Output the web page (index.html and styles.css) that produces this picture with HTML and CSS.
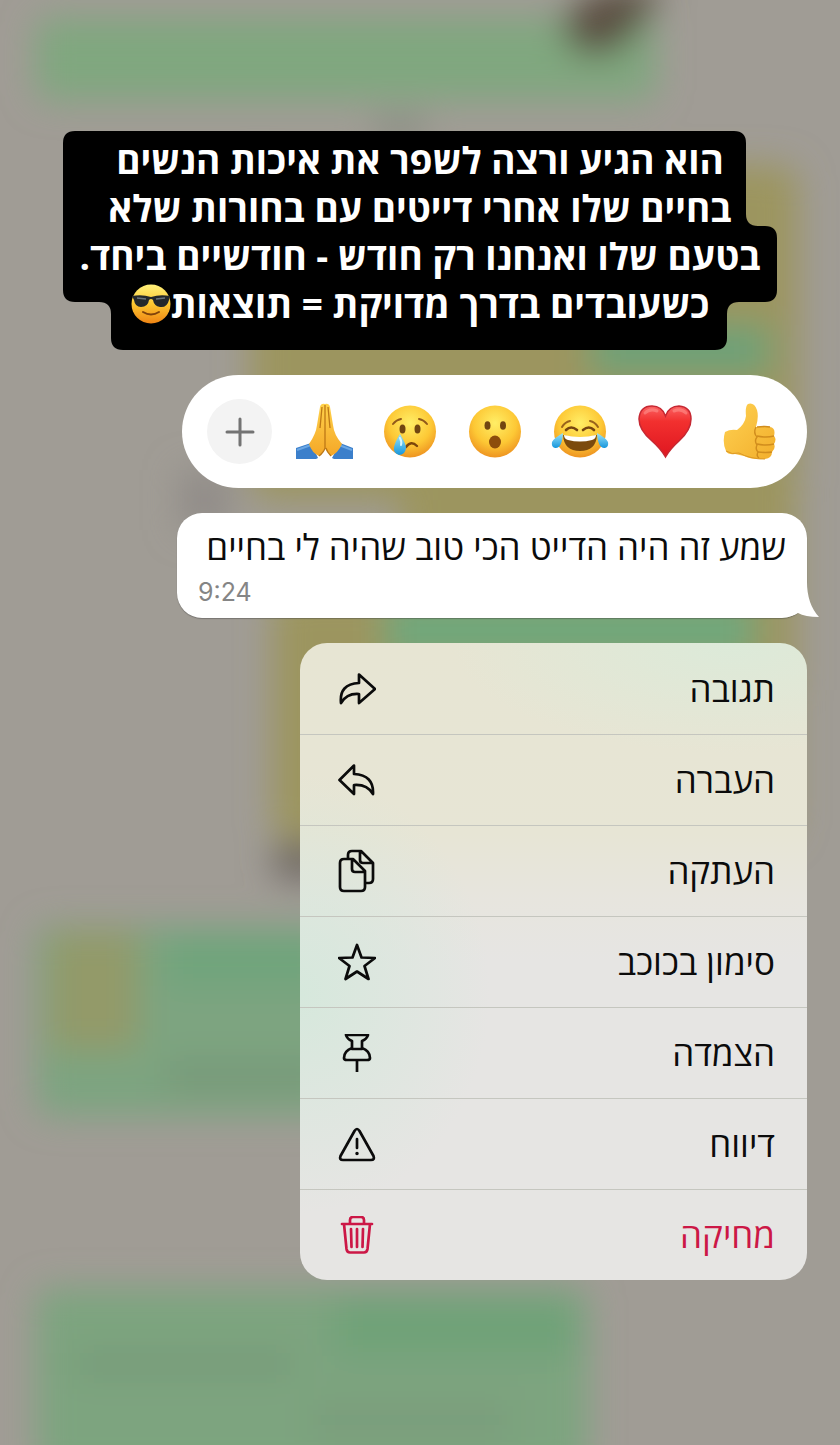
FILE: index.html
```html
<!DOCTYPE html>
<html lang="he" dir="rtl">
<head>
<meta charset="utf-8">
<meta name="viewport" content="width=device-width, initial-scale=1">
<title>הודעה</title>
<link rel="stylesheet" href="styles.css">
</head>
<body>
<svg class="backdrop" viewBox="0 0 840 1445" preserveAspectRatio="none" aria-hidden="true">
  <defs>
    <filter id="soft" x="-30%" y="-30%" width="160%" height="160%"><feGaussianBlur stdDeviation="17"/></filter>
  </defs>
  <rect width="840" height="1445" fill="#a09c95"/>
  <g filter="url(#soft)">
    <rect x="36" y="18" width="620" height="82" rx="14" fill="#80a77f"/>
    <path d="M560 20L600-12H665L630 40Q600 66 572 48Z" fill="#5c4f43"/>
    <rect x="375" y="118" width="50" height="20" fill="#858a80"/>
    <rect x="250" y="165" width="548" height="335" rx="20" fill="#9c955f"/>
    <rect x="590" y="325" width="180" height="50" fill="#6ca278"/>
    <rect x="400" y="490" width="396" height="200" fill="#9c955f"/>
    <rect x="272" y="590" width="520" height="250" rx="20" fill="#9c955f"/>
    <rect x="385" y="600" width="370" height="60" fill="#6fa77b"/>
    <rect x="180" y="470" width="50" height="60" fill="#918c88"/>
    <rect x="272" y="842" width="60" height="38" rx="18" fill="#6f6963"/>
    <rect x="36" y="926" width="330" height="190" rx="16" fill="#7da480"/>
    <rect x="165" y="936" width="160" height="50" fill="#6fa47b"/>
    <rect x="165" y="1060" width="160" height="32" fill="#789979"/>
    <rect x="50" y="932" width="88" height="118" fill="#939a69"/>
    <rect x="36" y="1288" width="552" height="190" rx="16" fill="#7da47f"/>
    <rect x="335" y="1298" width="240" height="58" fill="#6fa278"/>
    <rect x="75" y="1350" width="220" height="28" fill="#789b79"/>
    <rect x="310" y="1400" width="200" height="40" fill="#7a9e7b"/>
  </g>
</svg>

<main class="screen">
  <div class="caption">
    <svg class="caption-shape" viewBox="0 0 714 219" preserveAspectRatio="none" aria-hidden="true">
      <path d="M12 0H671Q683 0 683 12V83Q683 95 695 95H702Q714 95 714 107V159Q714 171 702 171H676Q664 171 664 183V207Q664 219 652 219H60Q48 219 48 207V183Q48 171 36 171H12Q0 171 0 159V12Q0 0 12 0Z"/>
    </svg>
    <p class="caption-text">הוא הגיע ורצה לשפר את איכות הנשים<br>בחיים שלו אחרי דייטים עם בחורות שלא<br>בטעם שלו ואנחנו רק חודש - חודשיים ביחד.<br>כשעובדים בדרך מדויקת = תוצאות<svg class="inline-emoji" viewBox="0 0 40 40" role="img" aria-label="משקפי שמש"><defs><linearGradient id="shade" x1="0" y1="0" x2="0" y2="1"><stop offset="0" stop-color="#fff07a"/><stop offset=".5" stop-color="#fdc730"/><stop offset="1" stop-color="#ef8414"/></linearGradient></defs><circle cx="20" cy="20" r="19.5" fill="url(#shade)"/><path d="M1 12Q11 10 20 13Q29 10 39 12L38 16Q36 24 29 23Q23 22 22 16Q20 14 18 16Q17 23 10 23Q4 23 3 16Z" fill="#24282b"/><path d="M6 14L15 15M25 15L34 14" stroke="#69737b" stroke-width="1.5"/><path d="M12 28Q20 33 28 28" fill="none" stroke="#80430b" stroke-width="2" stroke-linecap="round"/></svg></p>
  </div>

  <div class="reactions" role="group" aria-label="תגובות">
    <button class="reaction" type="button" aria-label="אגודל למעלה">
      <svg viewBox="0 0 60 60">
        <defs><linearGradient id="thumb" x1="0" y1="0" x2="1" y2="1"><stop offset="0" stop-color="#ffd253"/><stop offset="1" stop-color="#f2ae2b"/></linearGradient></defs>
        <path d="M5 30Q10 27 17 28Q25 22 26 14Q25 4 28 2Q34 0 37 8Q39 15 36 25L50 25Q56 26 54 34Q57 37 54 42Q56 46 52 50Q52 56 45 57Q33 58 24 54L15 52Q8 53 6 49Q2 40 5 30Z" fill="url(#thumb)"/>
        <path d="M36 25Q33 31 37 35Q34 39 37 43Q35 47 38 50Q36 54 39 56" fill="none" stroke="#d18d1d" stroke-width="1.4"/>
        <path d="M37 34Q46 36 54 34M37 42Q46 44 54 42M38 50Q46 51 52 50M37 25Q46 24 50 25" fill="none" stroke="#d18d1d" stroke-width="1.6"/>
        <path d="M6 49Q12 53 19 51Q30 57 45 57" fill="none" stroke="#dc9826" stroke-width="1"/>
      </svg>
    </button>
    <button class="reaction" type="button" aria-label="לב אדום">
      <svg viewBox="0 0 60 60">
        <defs><linearGradient id="heart" x1="0" y1="0" x2="0" y2="1"><stop offset="0" stop-color="#fb6262"/><stop offset=".3" stop-color="#f2302f"/><stop offset="1" stop-color="#df1620"/></linearGradient></defs>
        <path d="M30.500 55Q26 47 17 39Q4 28 4 17Q5 4 17 4Q27 4 30.500 14Q34 4 44 4Q56 5 56 17Q56 28 44 39Q35 47 30.500 55Z" fill="url(#heart)" stroke="#c62832" stroke-width="1.500"/>
        <path d="M10 11Q15 6 22 9M39 9Q46 6 51 11" fill="none" stroke="#ff9b95" stroke-width="3" stroke-linecap="round" opacity=".5"/>
      </svg>
    </button>
    <button class="reaction" type="button" aria-label="דמעות של צחוק">
      <svg viewBox="0 0 60 60">
        <defs><radialGradient id="face" cx=".5" cy=".34" r=".66"><stop offset="0" stop-color="#ffee66"/><stop offset=".62" stop-color="#fdc835"/><stop offset="1" stop-color="#ee9421"/></radialGradient>
        <linearGradient id="tear" x1="0" y1="0" x2="0" y2="1"><stop offset="0" stop-color="#9ce4fa"/><stop offset="1" stop-color="#1696dc"/></linearGradient></defs>
        <circle cx="30" cy="29.500" r="26" fill="url(#face)"/>
        <path d="M13 33Q30 38 47 33Q46 49 30 49Q14 49 13 33Z" fill="#7b4a0d"/>
        <path d="M14 33Q30 37 46 33Q46 37 42 38Q30 41 18 38Q14 37 14 33Z" fill="#fff"/>
        <path d="M16 28Q21 23 27 28M33 28Q39 23 44 28" fill="none" stroke="#754510" stroke-width="2.600" stroke-linecap="round"/>
        <path d="M12 25Q15 20 20 19M40 19Q45 20 48 25" fill="none" stroke="#9a631b" stroke-width="2" stroke-linecap="round"/>
        <path d="M13 31Q4 36 2 40Q1 45 5 46Q12 47 13 31ZM47 31Q56 36 58 40Q59 45 55 46Q48 47 47 31Z" fill="url(#tear)"/>
      </svg>
    </button>
    <button class="reaction" type="button" aria-label="מופתע">
      <svg viewBox="0 0 60 60">
        <circle cx="30" cy="29.500" r="26" fill="url(#face)"/>
        <ellipse cx="22.500" cy="23.500" rx="3" ry="4.300" fill="#714611"/><ellipse cx="38" cy="23.500" rx="3" ry="4.300" fill="#714611"/>
        <ellipse cx="30" cy="40" rx="6" ry="6.500" fill="#8c4d0c"/>
      </svg>
    </button>
    <button class="reaction" type="button" aria-label="עצוב">
      <svg viewBox="0 0 60 60">
        <circle cx="30" cy="29.500" r="26" fill="url(#face)"/>
        <path d="M13 22Q16 18 21 17M39 17Q44 18 47 22" fill="none" stroke="#91591a" stroke-width="2" stroke-linecap="round"/>
        <ellipse cx="22.500" cy="27" rx="3" ry="4.500" fill="#714611"/><ellipse cx="37.500" cy="27" rx="3" ry="4.500" fill="#714611"/>
        <path d="M26 45Q31 38 37 44" fill="none" stroke="#7c450b" stroke-width="2.400" stroke-linecap="round"/>
        <path d="M20 32Q26 42 26 46Q25 53 19 53Q13 51 14 45Q15 40 20 32Z" fill="url(#tear)"/>
        <path d="M20 36Q22 40 21 43" fill="none" stroke="#d8f7ff" stroke-width="2" stroke-linecap="round"/>
      </svg>
    </button>
    <button class="reaction" type="button" aria-label="ידיים צמודות">
      <svg viewBox="0 0 60 60">
        <defs><linearGradient id="palm" x1="0" y1="0" x2="0" y2="1"><stop offset="0" stop-color="#ffd24b"/><stop offset="1" stop-color="#f4a728"/></linearGradient></defs>
        <path d="M1 46L16 41L23 56L21 57H1ZM58 46L45 41L37 56L39 57H58Z" fill="#3b7fcb"/>
        <path d="M2 48L16 43M44 43L57 48" stroke="#6ba7e4" stroke-width="2"/>
        <path d="M30 2Q26 1 25 5L22 23Q21 32 14 42Q17 51 24 54Q29 49 30 46Q31 49 36 54Q43 51 47 42Q39 33 38 23L35 5Q34 1 30 2Z" fill="url(#palm)"/>
        <path d="M30 3V46Q29 50 24 54M31 46Q32 50 36 54M27 5L25 26M33 5L35 26" fill="none" stroke="#bd7816" stroke-width="1.300"/>
      </svg>
    </button>
    <button class="reaction reaction-more" type="button" aria-label="עוד תגובות">
      <svg viewBox="0 0 60 60"><path d="M30 17V43M17 30H43" fill="none" stroke="#737373" stroke-width="3" stroke-linecap="round"/></svg>
    </button>
  </div>

  <article class="message">
    <p class="message-text">שמע זה היה הדייט הכי טוב שהיה לי בחיים</p>
    <time class="message-time" dir="ltr" datetime="09:24">9:24</time>
    <svg class="message-tail" viewBox="0 0 36 36" aria-hidden="true"><path d="M0 0H24Q24 22 36 35Q22 35 15 31Q9 35 0 35Z" fill="#fff"/></svg>
  </article>

  <nav class="menu" aria-label="פעולות">
    <button class="menu-item" type="button"><span>תגובה</span>
      <svg class="icon" viewBox="0 0 38 38"><path d="M21 4.500L37 19L21 33V24Q9 23 3 33Q1 14 21 13Z"/></svg></button>
    <button class="menu-item" type="button"><span>העברה</span>
      <svg class="icon" viewBox="0 0 38 38"><path d="M16 4.500L1.500 19L16 33V24Q29 23 35 33Q36 14 16 13Z"/></svg></button>
    <button class="menu-item" type="button"><span>העתקה</span>
      <svg class="icon icon-copy" viewBox="0 0 38 44"><path d="M10 9V6Q10 2 14 2H23L35 14V30Q35 34 31 34H28M22 2V11Q22 14 25 14H35M6 10H15L27 22V38Q27 42 23 42H6Q2 42 2 38V14Q2 10 6 10ZM14 10V20Q14 23 17 23H27"/></svg></button>
    <button class="menu-item" type="button"><span>סימון בכוכב</span>
      <svg class="icon" viewBox="0 0 38 38"><path d="M19 2L23.500 14.500L37 15L26.500 23L30.500 36L19 28.500L7.500 36L11.500 23L1 15L14.500 14.500Z"/></svg></button>
    <button class="menu-item" type="button"><span>הצמדה</span>
      <svg class="icon" viewBox="0 0 38 38"><path d="M8 1H30Q29 5 24 7V14Q32 17 32 24Q32 26 29 26H9Q6 26 6 24Q6 17 14 14V7Q9 5 8 1ZM14 15H24M19 26V38"/></svg></button>
    <button class="menu-item" type="button"><span>דיווח</span>
      <svg class="icon" viewBox="0 0 38 38"><path d="M16.500 6Q19 2 21.500 6L35.500 31Q37 35 33 35H5Q1 35 2.500 31ZM19 14V23"/><circle cx="19" cy="28.500" r="1" fill="currentColor" stroke-width="1.500"/></svg></button>
    <button class="menu-item menu-item-delete" type="button"><span>מחיקה</span>
      <svg class="icon" viewBox="0 0 38 38"><path d="M4 8H34M12 8V4Q12 1 15 1H23Q26 1 26 4V8M6 8L8.500 33Q9 36.500 12 36.500H26Q29 36.500 29.500 33L32 8M13 13L13.500 31M19 13V31M25 13L24.500 31"/></svg></button>
  </nav>
</main>
</body>
</html>
```
FILE: styles.css
```css
* {
  box-sizing: border-box;
}

body {
  margin: 0;
  min-height: 100vh;
  position: relative;
  background: #a09c95;
  color: #0b0b0b;
  font-family: "Open Sans", "Noto Sans", "DejaVu Sans", sans-serif;
}

button {
  margin: 0;
  border: 0;
  padding: 0;
  background: none;
  color: inherit;
  font: inherit;
}

p {
  margin: 0;
}

.backdrop {
  position: absolute;
  inset: 0;
  width: 100%;
  height: 100%;
}

.screen {
  position: relative;
  display: flex;
  flex-direction: column;
  align-items: flex-start;
  gap: 25px;
  min-height: 100vh;
  padding: 131px 33px 40px;
}

.caption {
  position: relative;
  align-self: center;
  width: 714px;
  max-width: 100%;
  padding: 5px 0 22px;
}

.caption-shape {
  position: absolute;
  inset: 0;
  width: 100%;
  height: 100%;
}

.caption-text {
  position: relative;
  color: #fff;
  font-size: 37px;
  font-weight: 700;
  line-height: 48px;
  text-align: center;
  white-space: nowrap;
}

.inline-emoji {
  width: 40px;
  height: 40px;
  vertical-align: -6px;
}

.reactions {
  display: flex;
  gap: 20px;
  padding: 24px 25px;
  border-radius: 57px;
  background: #fff;
}

.reaction {
  display: grid;
  place-items: center;
  width: 65px;
  height: 65px;
  border-radius: 50%;
}

.reaction svg {
  width: 60px;
  height: 60px;
}

.reaction-more {
  background: #f3f3f3;
}

.message {
  position: relative;
  display: flex;
  flex-direction: column;
  width: 630px;
  max-width: 100%;
  padding: 8px 21px 6px;
  border-radius: 25px;
  background: #fff;
  box-shadow: 0 1px 1px rgba(60, 60, 60, 0.4);
}

.message-text {
  font-size: 35px;
  line-height: 52px;
}

.message-time {
  align-self: flex-end;
  color: #858585;
  font-family: Inter, "Liberation Sans", sans-serif;
  font-size: 25px;
  line-height: 39px;
}

.message-tail {
  position: absolute;
  right: -12px;
  bottom: 0;
  width: 36px;
  height: 36px;
}

.menu {
  width: 507px;
  max-width: 100%;
  overflow: hidden;
  border-radius: 27px;
  background:
    radial-gradient(ellipse 280px 110px at 85% 0, #dcead9, transparent),
    radial-gradient(ellipse 190px 220px at 0 55%, #d6e8dc, transparent),
    linear-gradient(#e7e5d3 0, #e7e5d5 30%, #e7e5de 40%, #e6e5e3 50%);
}

.menu-item {
  display: flex;
  align-items: center;
  justify-content: space-between;
  width: 100%;
  height: 91px;
  padding: 0 32px 0 38px;
  font-size: 35px;
  line-height: 48px;
}

.menu-item + .menu-item {
  border-top: 1px solid #c5c6bf;
}

.menu-item-delete {
  color: #cc1746;
}

.icon {
  width: 38px;
  height: 38px;
  fill: none;
  stroke: currentColor;
  stroke-width: 2.7;
  stroke-linecap: round;
  stroke-linejoin: round;
}

.icon-copy {
  height: 44px;
}
```
